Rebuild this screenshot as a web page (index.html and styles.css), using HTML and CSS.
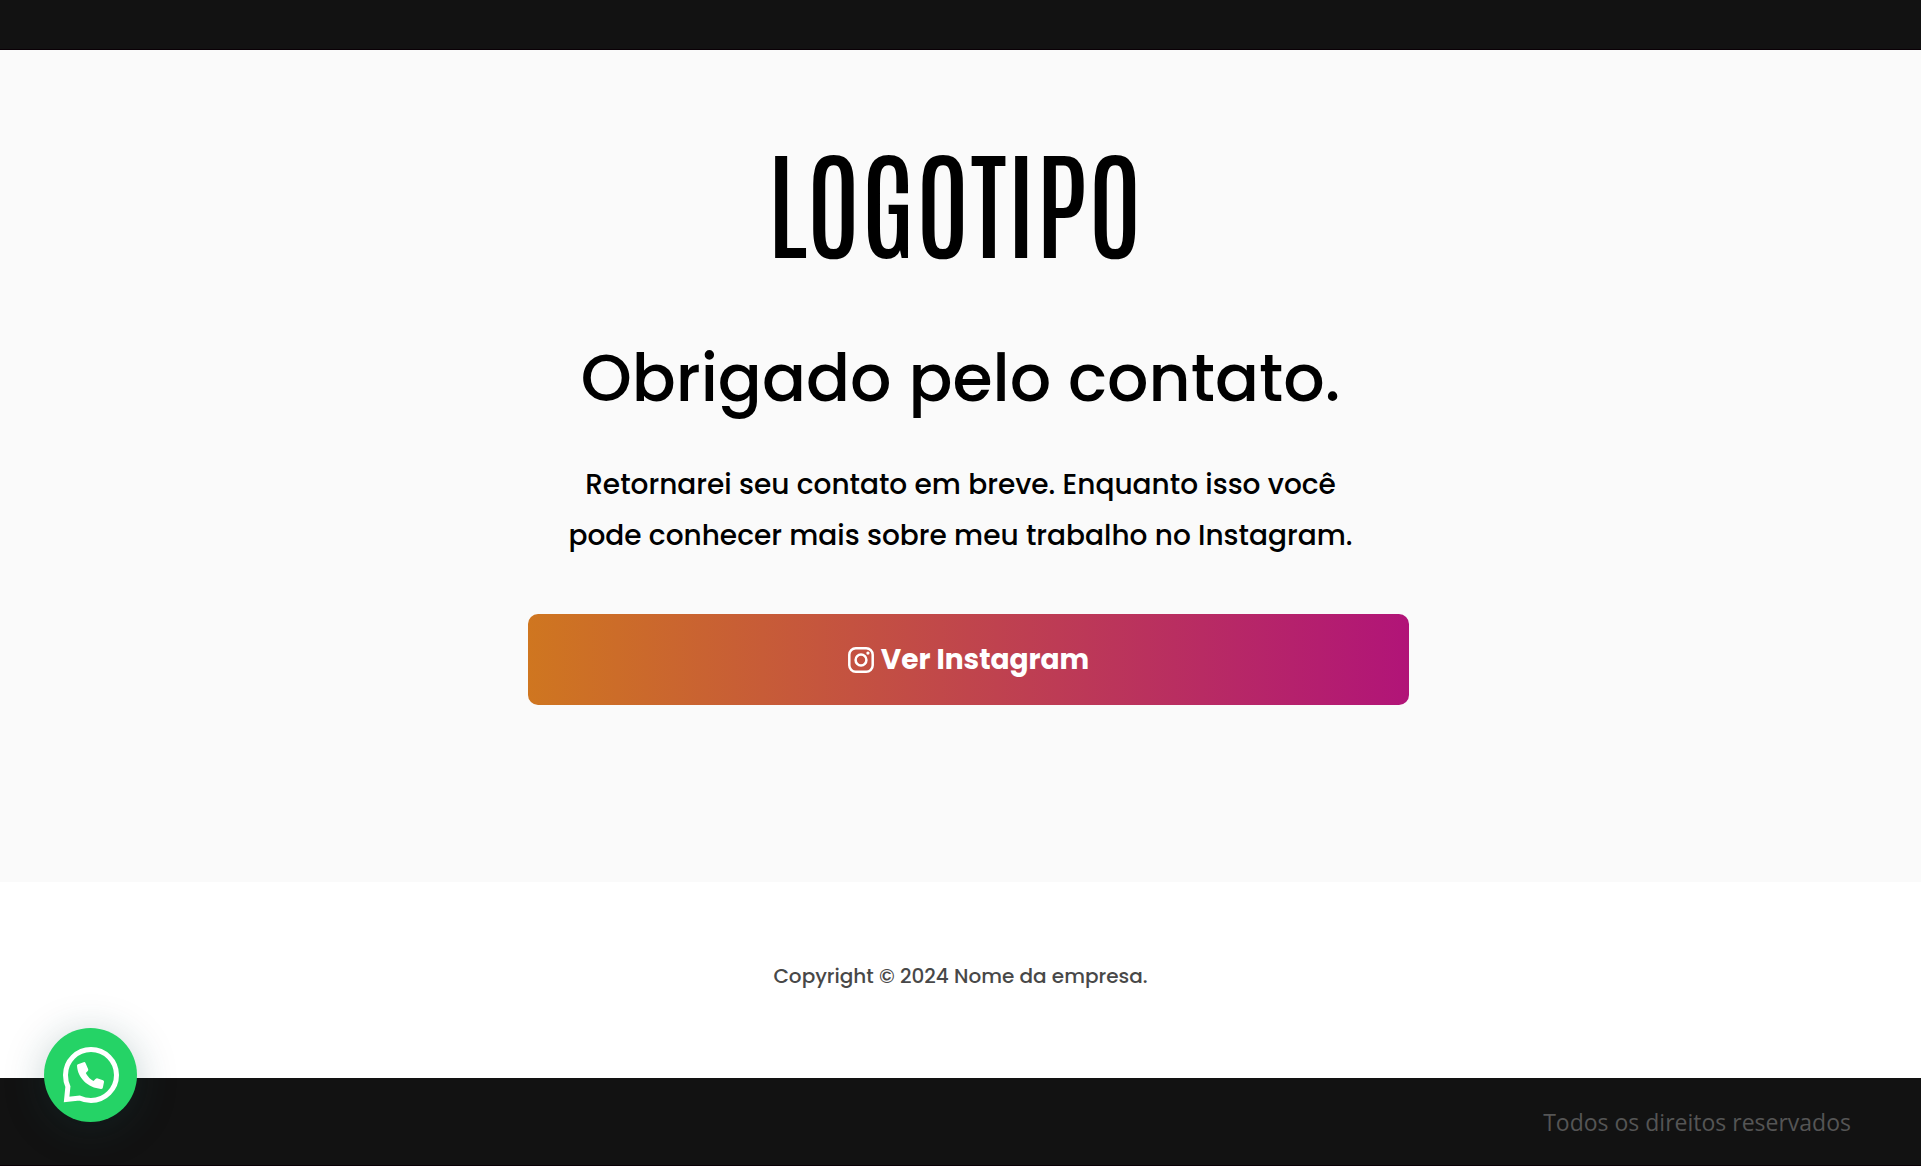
FILE: index.html
```html
<!DOCTYPE html>
<html lang="pt-BR">
<head>
    <meta charset="UTF-8">
    <meta name="viewport" content="width=device-width, initial-scale=1.0">
    <title>Obrigado pelo contato</title>
    <link rel="stylesheet" href="styles.css">
</head>
<body>
    <header class="topo"></header>

    <!-- Agradecimento -->
    <main class="obrigado">
        <div class="container">
            <div class="logo">LOGOTIPO</div>
            <h1>Obrigado pelo contato.</h1>
            <p>Retornarei seu contato em breve. Enquanto isso você<br>pode conhecer mais sobre meu trabalho no Instagram.</p>
            <a class="botao" href="#">
                <svg class="icone" viewBox="0 0 24 24" fill="none" stroke="currentColor" stroke-width="2.3" aria-hidden="true">
                    <rect x="1.200" y="1.200" width="21.600" height="21.600" rx="6"/>
                    <circle cx="12" cy="12" r="5"/>
                    <circle cx="18.400" cy="5.600" r="1.500" fill="currentColor" stroke="none"/>
                </svg>
                <span>Ver Instagram</span>
            </a>
        </div>
    </main>

    <div class="copyright">
        <p>Copyright © 2024 Nome da empresa.</p>
    </div>

    <footer class="rodape">
        <p>Todos os direitos reservados</p>
    </footer>

    <!-- Botão flutuante do WhatsApp -->
    <a class="whatsapp" href="#" aria-label="WhatsApp">
        <svg viewBox="0 0 56 56" aria-hidden="true">
            <path fill="none" stroke="#fff" stroke-width="5" d="M3.6 52.4L4.9 39.6C3.3 36.2 2.5 32 2.5 28A25.5 25.5 0 1 1 28 53.5C24 53.5 20 52.6 16.500 51Z"/>
            <path fill="#fff" d="M15 17.200L20.600 15.200Q22 14.800 22.600 16.200L25.200 22.200Q25.600 23.400 24.500 24.300L22.800 26Q25.400 31.300 30.500 33.900L32.500 32Q33.400 31 34.800 31.400L40 33.200Q41.300 33.700 41 35L39.900 40.500Q39.600 42 38 42C25 41 14.500 31 14 18.600Q14 17.500 15 17.200Z"/>
        </svg>
    </a>
</body>
</html>
```
FILE: styles.css
```css
body {
    margin: 0;
    min-height: 100vh;
    display: flex;
    flex-direction: column;
    font-family: Poppins, Inter, sans-serif;
    background-color: #fff;
    color: #000;
}
.topo {
    height: 49px;
    background-color: #121212;
    border-bottom: 1px solid #0a0006;
}
.obrigado {
    padding: 78px 0 177px;
    background-color: #fafafa;
}
.container {
    width: 45%;
    margin: 0 auto;
    text-align: center;
}
.logo {
    margin-right: 12px;
    font-family: Antonio, "Liberation Sans Narrow", "DejaVu Sans Condensed", sans-serif;
    font-size: 119px;
    font-weight: 500;
    line-height: 140px;
    white-space: nowrap;
}
h1 {
    margin: 63px 0 0;
    font-size: 65px;
    font-weight: 500;
    line-height: 96px;
    white-space: nowrap;
}
.container p {
    margin: 32px 0 53px;
    font-size: 28px;
    font-weight: 500;
    line-height: 51px;
    white-space: nowrap;
}
.botao {
    display: flex;
    align-items: center;
    justify-content: center;
    gap: 7px;
    width: 100%;
    padding: 24px 8px;
    border-radius: 10px;
    background: linear-gradient(90deg, #cf7620, #b11478);
    color: #fff;
    font-size: 28px;
    font-weight: 700;
    line-height: 43px;
    text-decoration: none;
}
.icone {
    width: 26px;
    height: 26px;
}
.copyright {
    padding: 76px 0 84px;
    text-align: center;
}
.copyright p {
    margin: 0;
    color: #484848;
    font-size: 20px;
    font-weight: 500;
    line-height: 36px;
}
.rodape {
    flex-grow: 1;
    padding: 0 70px;
    display: flex;
    align-items: center;
    justify-content: flex-end;
    background-color: #121212;
    border-bottom: 1px solid #0a0006;
}
.rodape p {
    margin: 0;
    color: #555;
    font-family: "Segoe UI", "Open Sans", sans-serif;
    font-size: 23px;
}
.whatsapp {
    position: fixed;
    left: 44px;
    bottom: 44px;
    width: 93px;
    height: 94px;
    display: flex;
    align-items: center;
    justify-content: center;
    border-radius: 50%;
    background-color: #25d366;
    box-shadow: 0 6px 40px rgba(24, 72, 77, 0.25);
}
.whatsapp svg {
    width: 56px;
    height: 56px;
}
```
